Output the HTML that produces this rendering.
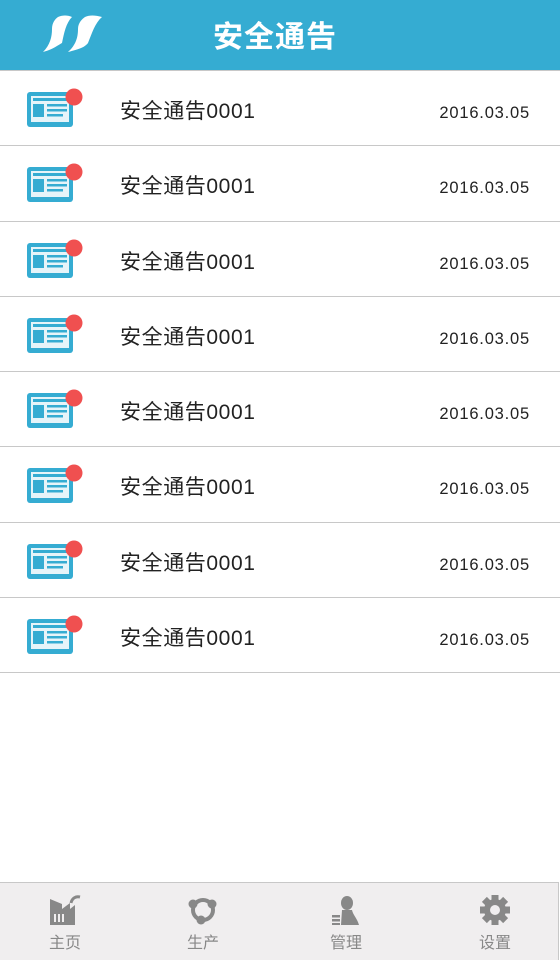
<!DOCTYPE html>
<html><head><meta charset="utf-8"><style>
*{margin:0;padding:0;box-sizing:border-box}
body{width:560px;height:960px;background:#fff;font-family:"Liberation Sans","Noto Sans CJK SC",sans-serif;position:relative;overflow:hidden}
.hd{height:71px;background:#35acd2;position:relative;border-bottom:1px solid #c8c8c8}
.hd h1{position:absolute;left:0;width:550px;text-align:center;top:12px;color:#fff;font-size:30px;font-weight:bold;letter-spacing:1px}
.row{height:75.3px;border-bottom:1px solid #c8c8c8;position:relative}
.row svg{position:absolute;left:26px;top:17px}
.t{position:absolute;left:120px;top:24px;font-size:21px;color:#222;letter-spacing:0.6px}
.d{position:absolute;right:30px;top:33px;font-size:16.5px;color:#222;letter-spacing:0.8px}
.nav{position:absolute;left:0;top:882px;width:559px;height:78px;background:#f0eeef;border-top:1px solid #c8c8c8;border-right:1px solid #c8c8c8}
.it{position:absolute;top:0;width:80px;text-align:center;color:#888;font-size:16px}
.it svg{display:block;margin:12px auto 4px}
</style></head><body>
<div class="hd">
<svg style="position:absolute;left:40px;top:15px" width="66" height="40" viewBox="0 0 66 40"><path d="M18 2 C22 0 28 0 32 2 C26 8 24 18 22 28 C18 30 14 34 3 37 C10 30 12 22 12 14 C12 8 15 4 18 2Z" fill="#fff"/><path d="M45 2 C49 0 55 0 62 2 C55 8 52 18 48 28 C45 32 40 34 28 37 C36 30 38 22 38 14 C38 8 42 4 45 2Z" fill="#fff"/></svg>
<h1>安全通告</h1></div>
<div id="list"></div>
<div class="nav">
<div class="it" style="left:25px"><svg width="34" height="30" viewBox="0 0 34 30"><path d="M2 4 L2 30 L27 30 L27 10 L22 14 L22 8 L14 14 L14 9Z" fill="#888"/><path d="M23 8 C24 3 28 1 32 2" stroke="#888" stroke-width="3" fill="none"/><rect x="6" y="19" width="2" height="8" fill="#f0eeef"/><rect x="10" y="19" width="2" height="8" fill="#f0eeef"/><rect x="14" y="19" width="2" height="8" fill="#f0eeef"/></svg>主页</div>
<div class="it" style="left:163px"><svg width="30" height="30" viewBox="0 0 30 30"><circle cx="15" cy="15" r="10" stroke="#888" stroke-width="4" fill="none"/><circle cx="5" cy="9" r="4.5" fill="#888"/><circle cx="24" cy="9" r="4.5" fill="#888"/><circle cx="13" cy="25" r="4.5" fill="#888"/></svg>生产</div>
<div class="it" style="left:306px"><svg width="30" height="30" viewBox="0 0 30 30"><ellipse cx="16" cy="8" rx="6" ry="7" fill="#888"/><path d="M11 15 L21 15 C22 20 26 23 28 30 L10 30Z" fill="#888"/><rect x="1" y="20" width="8" height="2.5" fill="#888"/><rect x="1" y="24" width="8" height="2.5" fill="#888"/><rect x="1" y="28" width="8" height="2" fill="#888"/></svg>管理</div>
<div class="it" style="left:455px"><svg width="30" height="30" viewBox="0 0 30 30"><g fill="#888" transform="translate(15 15)"><rect x="-3.5" y="-15" width="7" height="30"/><rect x="-3.5" y="-15" width="7" height="30" transform="rotate(45)"/><rect x="-3.5" y="-15" width="7" height="30" transform="rotate(90)"/><rect x="-3.5" y="-15" width="7" height="30" transform="rotate(135)"/><circle r="11"/></g><circle cx="15" cy="15" r="5" fill="#f0eeef"/></svg>设置</div>
</div>
<script>
var h='';for(var i=0;i<8;i++)h+='<div class="row"><svg width="60" height="40" viewBox="0 0 60 40"><rect x="1" y="4" width="46" height="35" rx="3" fill="#35acd2"/><rect x="5" y="8" width="38" height="26" fill="#e6f4f9"/><rect x="7" y="10" width="34" height="3" fill="#35acd2"/><rect x="7" y="16" width="11" height="13" fill="#35acd2"/><rect x="21" y="16" width="20" height="2.5" fill="#35acd2"/><rect x="21" y="21" width="20" height="2.5" fill="#35acd2"/><rect x="21" y="26" width="16" height="2.5" fill="#35acd2"/><circle cx="48" cy="9" r="8.5" fill="#f05050"/></svg><div class="t">安全通告0001</div><div class="d">2016.03.05</div></div>';
document.getElementById('list').innerHTML=h;
</script>
</body></html>
